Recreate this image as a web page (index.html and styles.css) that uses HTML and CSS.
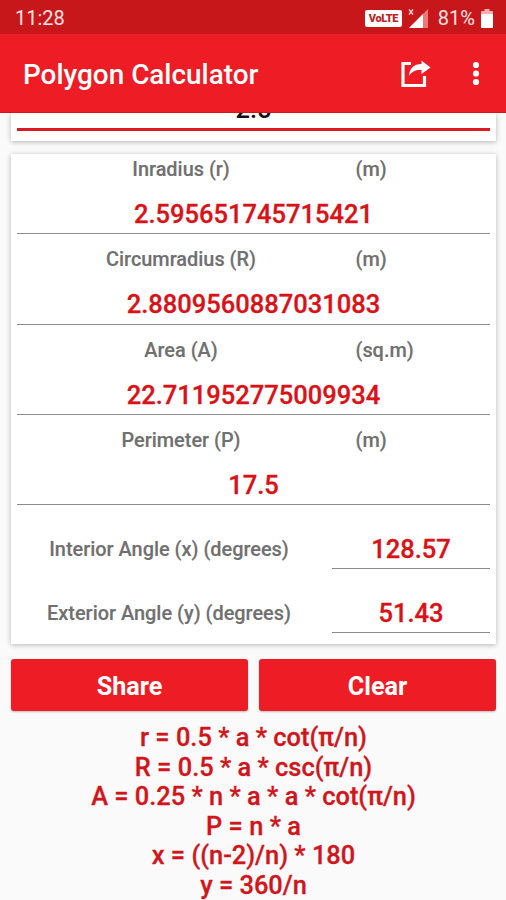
FILE: index.html
```html
<!DOCTYPE html>
<html lang="en">
<head>
<meta charset="utf-8">
<title>Polygon Calculator</title>
<link rel="stylesheet" href="styles.css">
</head>
<body>
<div class="status">
  <span class="time">11:28</span>
  <span class="volte">VoLTE</span>
  <svg class="signal" width="21" height="21" viewBox="0 0 21 21"><path d="M1 20L20 1V20Z" fill="#ed7779"/><path d="M1 20L15 6V20Z" fill="#fff"/><path d="M1 1.500L5 6.500M5 1.500L1 6.500" stroke="#fbd5d5" stroke-width="1.300"/></svg>
  <span class="percent">81%</span>
  <svg class="battery" width="12" height="19" viewBox="0 0 12 19"><path d="M3.500 0H8.500V2H11Q12 2 12 3V18Q12 19 11 19H1Q0 19 0 18V3Q0 2 1 2H3.500Z" fill="#f4b0b0"/><path d="M0 5H12V18Q12 19 11 19H1Q0 19 0 18Z" fill="#fff"/></svg>
</div>
<header class="bar">
  <h1>Polygon Calculator</h1>
  <svg class="share-icon" width="32" height="28" viewBox="0 0 32 28"><path d="M11 3.500H3V25.500H24.500V16" fill="none" stroke="#fff" stroke-width="3.200"/><path d="M9 16C9.500 8 14 4 21.500 4V.5L30.500 7.500L21.500 14V10C16 9.500 12 11 9 16Z" fill="#fff"/></svg>
  <svg class="more" width="8" height="26" viewBox="0 0 8 26"><g fill="#fff"><circle cx="4" cy="4" r="3.100"/><circle cx="4" cy="12.500" r="3.100"/><circle cx="4" cy="21" r="3.100"/></g></svg>
</header>
<main>
  <section class="card input-card"><div class="input">2.5</div></section>
  <section class="card results">
    <div class="result"><div class="labels"><span>Inradius (r)</span><span>(m)</span></div><div class="value">2.595651745715421</div></div>
    <div class="result"><div class="labels"><span>Circumradius (R)</span><span>(m)</span></div><div class="value">2.8809560887031083</div></div>
    <div class="result"><div class="labels"><span>Area (A)</span><span>(sq.m)</span></div><div class="value">22.711952775009934</div></div>
    <div class="result"><div class="labels"><span>Perimeter (P)</span><span>(m)</span></div><div class="value">17.5</div></div>
    <div class="angle"><span>Interior Angle (x) (degrees)</span><div class="value">128.57</div></div>
    <div class="angle"><span>Exterior Angle (y) (degrees)</span><div class="value">51.43</div></div>
  </section>
  <div class="buttons"><button>Share</button><button>Clear</button></div>
  <div class="formulas">
    <div>r = 0.5 * a * cot(π/n)</div>
    <div>R = 0.5 * a * csc(π/n)</div>
    <div>A = 0.25 * n * a * a * cot(π/n)</div>
    <div>P = n * a</div>
    <div>x = ((n-2)/n) * 180</div>
    <div>y = 360/n</div>
  </div>
</main>
</body>
</html>
```
FILE: styles.css
```css
* { box-sizing: border-box; }
body {
  margin: 0;
  height: 900px;
  overflow: hidden;
  background: #fafafa;
  font-family: Roboto, sans-serif;
  font-weight: 500;
  display: flex;
  flex-direction: column;
}
.status {
  flex: none;
  height: 34px;
  background: #c8171b;
  color: #fde3e3;
  display: flex;
  align-items: center;
  padding: 2px 13px 0 15px;
  font-size: 20px;
  font-weight: 400;
}
.time { margin-right: auto; }
.volte {
  width: 37px;
  height: 17px;
  border-radius: 2px;
  background: #fff;
  color: #b92528;
  font-size: 11px;
  font-weight: 900;
  line-height: 17px;
  text-align: center;
  letter-spacing: -0.4px;
}
.signal { margin: 0 9px 0 6px; }
.battery { margin-left: 6px; }
.bar {
  flex: none;
  height: 79px;
  background: #ee1c25;
  border-bottom: 1px solid #d0161d;
  display: flex;
  align-items: center;
  padding: 2px 26px 0 23px;
}
h1 {
  margin: 0 auto 0 0;
  color: #fff;
  font-size: 27.9px;
  font-weight: 500;
}
.share-icon { margin-right: 40px; }
main {
  flex: 1;
  min-height: 0;
  overflow: hidden;
  padding: 0 10px 0 11px;
}
.card {
  background: #fff;
  box-shadow: 0 1px 5px rgba(0, 0, 0, .28);
  padding: 0 6px;
}
.input-card { height: 28px; margin-bottom: 13px; }
.input {
  height: 18px;
  padding-bottom: 4px;
  border-bottom: 3px solid #dc1a22;
  color: #111;
  font-size: 25.5px;
  line-height: 30px;
  text-align: center;
  display: flex;
  align-items: flex-end;
  justify-content: center;
  overflow: hidden;
}
.results { height: 490px; }
.result { height: 80.3px; margin-bottom: 10px; border-bottom: 1.5px solid #8b8b8b; }
.labels {
  height: 31px;
  display: grid;
  grid-template-columns: 328px 1fr;
  column-gap: 10.5px;
  align-items: center;
  color: #707070;
  font-size: 19.9px;
  -webkit-text-stroke: .15px;
}
.labels span:first-child { text-align: center; }
.value {
  color: #d91218;
  font-size: 25.5px;
  line-height: 30px;
  text-align: center;
  -webkit-text-stroke: .3px;
}
.result .value { margin-top: 14px; }
.angle {
  display: grid;
  grid-template-columns: 304px 158px;
  column-gap: 11px;
  align-items: center;
  color: #707070;
  font-size: 19.9px;
  -webkit-text-stroke: .15px;
  text-align: center;
  height: 36px;
  margin-top: 28px;
}
.angle > span { padding-bottom: 4px; }
.angle .value { height: 36px; line-height: 33px; border-bottom: 1.5px solid #8b8b8b; }
.buttons {
  display: grid;
  grid-template-columns: 1fr 1fr;
  gap: 11px;
  margin-top: 15px;
}
button {
  height: 52px;
  border: 0;
  border-radius: 3px;
  background: #ee1c25;
  box-shadow: 0 1px 2px rgba(0, 0, 0, .25);
  color: #fff;
  font: 700 25.2px Roboto, sans-serif;
  padding: 2px 0 0;
}
.formulas {
  margin-top: 12px;
  color: #d0161c;
  font-size: 25.4px;
  line-height: 29.5px;
  text-align: center;
  -webkit-text-stroke: .3px;
}
```
